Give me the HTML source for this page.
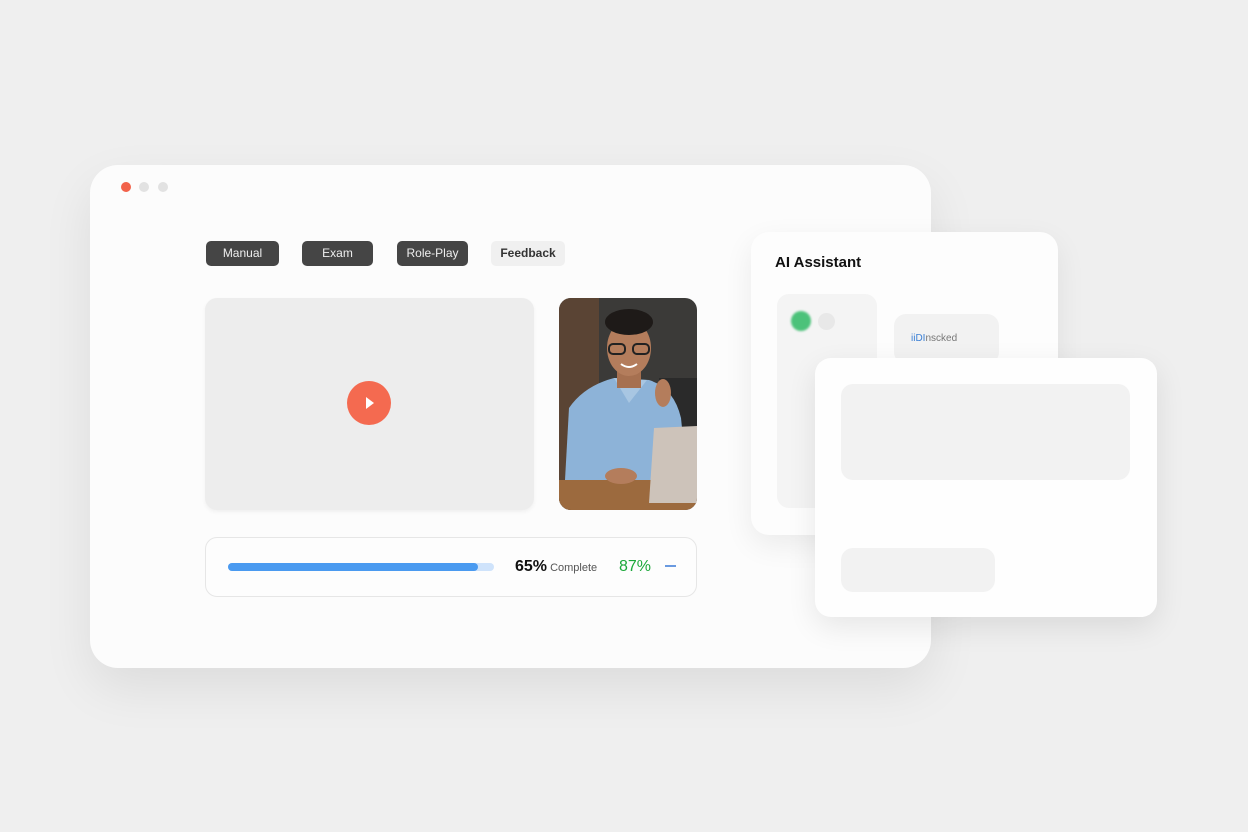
<!DOCTYPE html>
<html><head><style>
body{margin:0;width:1248px;height:832px;background:#efefef;font-family:"Liberation Sans",sans-serif;position:relative;overflow:hidden}
.a{position:absolute}
.win{left:90px;top:165px;width:841px;height:503px;background:#fcfcfc;border-radius:28px;box-shadow:0 20px 50px rgba(0,0,0,.08)}
.dot{width:10px;height:10px;border-radius:50%;top:182px}
.tab{top:241px;height:25px;border-radius:5px;background:#454545;color:#eee;font-size:12px;line-height:25px;text-align:center}
</style></head><body>
<div class="a win"></div>
<div class="a dot" style="left:121px;background:#f2624a"></div>
<div class="a dot" style="left:139px;background:#e2e2e2"></div>
<div class="a dot" style="left:158px;background:#e2e2e2"></div>
<div class="a tab" style="left:206px;width:73px">Manual</div>
<div class="a tab" style="left:302px;width:71px">Exam</div>
<div class="a tab" style="left:397px;width:71px">Role-Play</div>
<div class="a tab" style="left:491px;width:74px;background:#f0f0f0;color:#333;font-weight:bold">Feedback</div>
<div class="a" style="left:205px;top:298px;width:329px;height:212px;background:#ededed;border-radius:12px;box-shadow:0 2px 4px rgba(0,0,0,.05)"></div>
<div class="a" style="left:347px;top:381px;width:44px;height:44px;border-radius:50%;background:#f46a50"></div>
<div class="a" style="left:366px;top:397px;width:0;height:0;border-left:8px solid #fff;border-top:6px solid transparent;border-bottom:6px solid transparent"></div>
<svg class="a" style="left:559px;top:298px;border-radius:12px" width="138" height="212" viewBox="0 0 138 212">
<rect width="138" height="212" fill="#3b3a38"/><rect width="40" height="212" fill="#5a4434"/>
<rect x="100" y="80" width="38" height="60" fill="#2a2a2a"/>
<path d="M5 200 L10 110 Q25 88 55 80 L90 82 Q115 90 122 120 L130 200Z" fill="#8db3d8"/>
<path d="M55 80 L70 105 L88 82Z" fill="#a8c6e2"/>
<rect x="58" y="70" width="24" height="20" fill="#a67050"/>
<ellipse cx="70" cy="50" rx="22" ry="28" fill="#b47d5c"/>
<ellipse cx="70" cy="24" rx="24" ry="13" fill="#1e1a18"/>
<rect x="50" y="46" width="16" height="10" rx="4" fill="none" stroke="#222" stroke-width="2"/><rect x="74" y="46" width="16" height="10" rx="4" fill="none" stroke="#222" stroke-width="2"/>
<path d="M62 66 Q70 72 78 66" stroke="#fff" stroke-width="2" fill="none"/>
<ellipse cx="104" cy="95" rx="8" ry="14" fill="#b47d5c"/>
<rect x="0" y="182" width="138" height="30" fill="#9c6a3e"/>
<path d="M95 130 L138 128 L138 205 L90 205Z" fill="#cdc3ba"/>
<ellipse cx="62" cy="178" rx="16" ry="8" fill="#b47d5c"/>
</svg>
<div class="a" style="left:205px;top:537px;width:490px;height:58px;border:1px solid #e6e6e6;border-radius:12px;background:#fdfdfd"></div>
<div class="a" style="left:228px;top:563px;width:266px;height:8px;border-radius:4px;background:#cfe3fb"></div>
<div class="a" style="left:228px;top:563px;width:250px;height:8px;border-radius:4px;background:#4a9af0"></div>
<div class="a" style="left:515px;top:558px;font-size:16px;font-weight:bold;color:#111">65%<span style="font-size:11px;font-weight:normal;color:#555"> Complete</span></div>
<div class="a" style="left:619px;top:558px;font-size:16px;color:#1ca83a">87%</div>
<div class="a" style="left:665px;top:565px;width:11px;height:1.5px;background:#6a9ae0"></div>
<div class="a" style="left:751px;top:232px;width:307px;height:303px;background:#fdfdfd;border-radius:18px;box-shadow:0 10px 30px rgba(0,0,0,.07)"></div>
<div class="a" style="left:775px;top:254px;font-size:15px;font-weight:bold;color:#111">AI Assistant</div>
<div class="a" style="left:777px;top:294px;width:100px;height:214px;background:#f4f4f4;border-radius:12px"></div>
<div class="a" style="left:791px;top:311px;width:20px;height:20px;border-radius:50%;background:#4cc27a;filter:blur(1px)"></div>
<div class="a" style="left:818px;top:313px;width:17px;height:17px;border-radius:50%;background:#e8e8e8"></div>
<div class="a" style="left:894px;top:314px;width:105px;height:50px;background:#f2f2f2;border-radius:12px"></div>
<div class="a" style="left:911px;top:333px;font-size:10px;color:#777"><span style="color:#3a7fd5">iiDI</span>nscked</div>
<div class="a" style="left:815px;top:358px;width:342px;height:259px;background:#fefefe;border-radius:16px;box-shadow:0 10px 30px rgba(0,0,0,.09)"></div>
<div class="a" style="left:841px;top:384px;width:289px;height:96px;background:#f2f2f2;border-radius:12px"></div>
<div class="a" style="left:841px;top:548px;width:154px;height:44px;background:#f2f2f2;border-radius:12px"></div>
</body></html>
